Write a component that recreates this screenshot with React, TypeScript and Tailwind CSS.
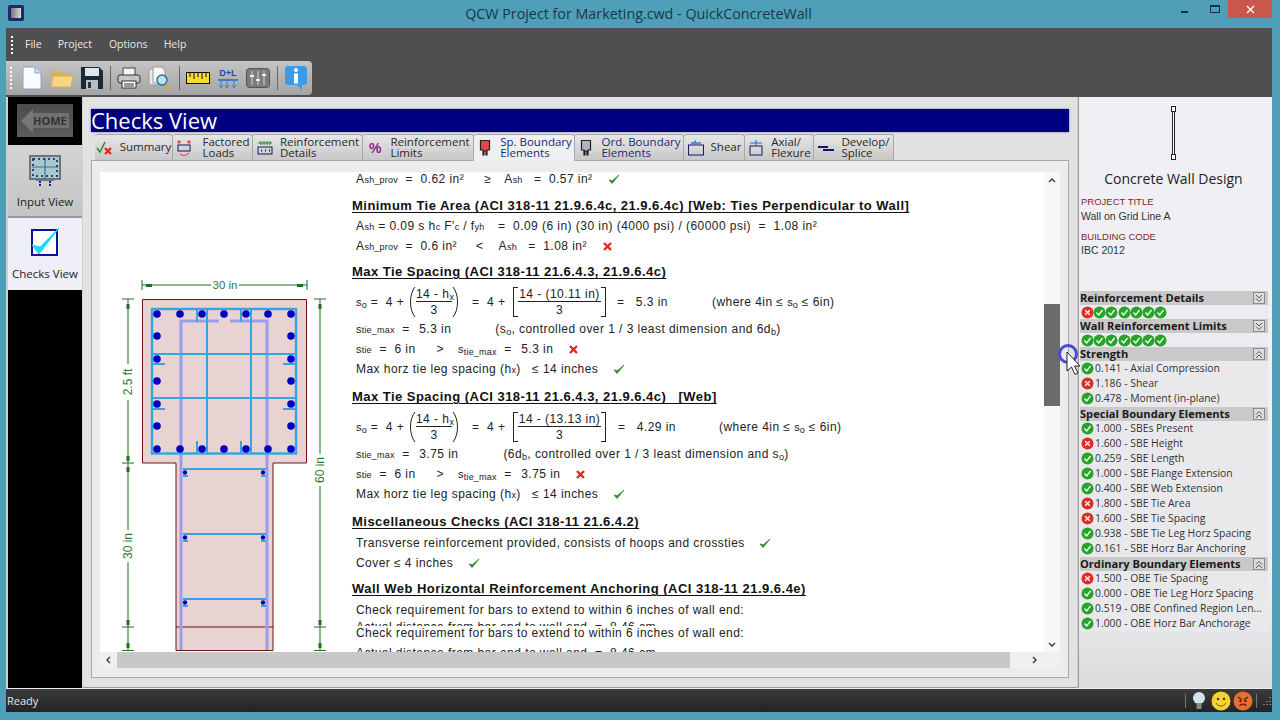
import React from "react";

const Check = ({ className = "" }: { className?: string }) => (
  <svg width="12" height="11" viewBox="0 0 12 11" className={"shrink-0 " + className}>
    <path d="M1 6 L4 9.5 L11 1 L4.3 6.8 Z" fill="#2f8a2f" stroke="#2f8a2f" strokeWidth="0.8" />
  </svg>
);
const Cross = ({ className = "" }: { className?: string }) => (
  <svg width="9" height="9" viewBox="0 0 9 9" className={"shrink-0 " + className}>
    <path d="M1 1 L8 8 M8 1 L1 8" stroke="#e0281c" strokeWidth="2.4" />
  </svg>
);
const Dot = ({ ok = true }: { ok?: boolean }) => (
  <svg width="13" height="13" viewBox="0 0 13 13" className="shrink-0">
    <circle cx="6.5" cy="6.5" r="6" fill={ok ? "#27a327" : "#e22c22"} />
    {ok ? (
      <path d="M3.5 6.5 L5.7 9 L9.5 4" stroke="#fff" strokeWidth="1.3" fill="none" />
    ) : (
      <path d="M4.2 4.2 L8.8 8.8 M8.8 4.2 L4.2 8.8" stroke="#fff" strokeWidth="1.3" />
    )}
  </svg>
);
const Sub = ({ children }: { children: React.ReactNode }) => (
  <span className="text-[9px] tracking-[0.2px] relative top-[2px]">{children}</span>
);
const S = ({ children }: { children: React.ReactNode }) => (
  <span className="text-[11px] tracking-[0.2px]">{children}</span>
);
const Row = ({ className = "", children }: { className?: string; children: React.ReactNode }) => (
  <div className={"h-[20px] flex items-center whitespace-pre pl-[4px] shrink-0 " + className}>{children}</div>
);
const Head = ({ className, children }: { className: string; children: React.ReactNode }) => (
  <div className={"h-[20px] flex items-center whitespace-pre shrink-0 font-bold underline underline-offset-[2px] text-[13px] tracking-[0.47px] text-[#111] " + className}>
    {children}
  </div>
);
const Paren = ({ flip = false }: { flip?: boolean }) => (
  <svg width="9" height="32" viewBox="0 0 9 32" className={flip ? "shrink-0 -scale-x-100" : "shrink-0"}>
    <path d="M8 1 C2 8 2 24 8 31" stroke="#222" fill="none" strokeWidth="1" />
  </svg>
);
const Frac = ({ top, w }: { top: React.ReactNode; w: string }) => (
  <div className={"flex flex-col items-center shrink-0 " + w}>
    <div className="h-[16px] leading-[16px] border-b border-[#222] w-full text-center">{top}</div>
    <div className="h-[16px] leading-[16px]">3</div>
  </div>
);

const Equation = ({ num, res, wide }: { num: string; res: string; wide?: boolean }) => (
  <div className="h-[34px] flex items-center whitespace-pre pl-[4px] shrink-0 mt-[3px]">
    <span className="w-[49px] shrink-0">
      <S>s</S>
      <Sub>o</Sub>
      <span> =  4 +</span>
    </span>
    <span className="ml-[2px] shrink-0 flex items-center">
      <Paren />
    </span>
    <Frac top={<span>14 - h<Sub>x</Sub></span>} w="w-[36px]" />
    <Paren flip />
    <span className="ml-[11px] w-[33px] shrink-0">=  4 +</span>
    <div className="ml-[8px] w-[5px] h-[30px] border-l border-t border-b border-[#222] shrink-0" />
    <Frac top={num} w="w-[83px]" />
    <div className="w-[5px] h-[30px] border-r border-t border-b border-[#222] shrink-0" />
    <span className={(wide ? "ml-[12px] w-[101px]" : "ml-[11px] w-[95px]") + " shrink-0"}>=   {res}</span>
    <span>
      (where 4in ≤ <S>s</S><Sub>o</Sub> ≤ 6in)
    </span>
  </div>
);

const Drawing = () => {
  const g = "#1f6f1f";
  const tx = [157, 180, 202, 224, 246, 268, 291];
  const ty = [336, 359, 381, 404, 426];
  const wy = [469, 534, 599];
  const tick = (x: number, y: number, k: string) => (
    <path key={k} d={`M${x - 6} ${y}H${x + 6}`} stroke={g} strokeWidth="1" />
  );
  return (
    <svg width="252" height="480" viewBox="100 172 252 480" className="shrink-0">
      <path d="M142 285H307M142 280V290M307 280V290" stroke={g} strokeWidth="1" fill="none" />
      <rect x="146" y="284" width="6" height="3" fill={g} />
      <rect x="297" y="284" width="6" height="3" fill={g} />
      <rect x="211" y="278" width="28" height="14" fill="#fff" />
      <text x="225" y="289" textAnchor="middle" fontSize="11.5" fill="#2f7a2f" fontFamily="Liberation Sans">30 in</text>

      <path d="M142.5 299.5H306.5V463H273V650.5H176V463H142.5Z" fill="#e8d3d2" stroke="#6e1212" strokeWidth="1" />
      <path d="M176 627H273" stroke="#6e1212" strokeWidth="1" />

      <path d="M181 650V321H219M230 321H267V650" stroke="#9c9cec" strokeWidth="3" fill="none" />
      <g stroke="#35a4e0" strokeWidth="2" fill="none">
        <rect x="152" y="309" width="144" height="144.5" strokeWidth="2.4" />
        <path d="M152 354H296M152 398H296M207 309V453M251 309V453" />
        <path d="M197 309V322M241 309V322M197 453V441M241 453V441" />
        <path d="M153 364H165M283 364H295M153 409H165M283 409H295" />
        {wy.map((y) => (
          <path key={y} d={`M183 ${y}H266M183 ${y + 7}H188M261 ${y + 7}H266`} />
        ))}
      </g>
      {tx.map((x) => (
        <g key={x}>
          <circle cx={x} cy="314" r="3.8" fill="#0000c4" />
          <circle cx={x} cy="449" r="3.8" fill="#0000c4" />
        </g>
      ))}
      {ty.map((y) => (
        <g key={y}>
          <circle cx="157" cy={y} r="3.8" fill="#0000c4" />
          <circle cx="291" cy={y} r="3.8" fill="#0000c4" />
        </g>
      ))}
      {wy.map((y) => (
        <g key={y}>
          <circle cx="185" cy={y + 3.5} r="2.2" fill="#0000b0" />
          <circle cx="263" cy={y + 3.5} r="2.2" fill="#0000b0" />
        </g>
      ))}

      <path d="M128 299V651M320 299V651" stroke={g} strokeWidth="1" />
      {[299, 463, 627, 650.5].map((y) => tick(128, y, "l" + y))}
      {[299, 627, 650.5].map((y) => tick(320, y, "r" + y))}
      {[304, 456, 467, 620, 643].map((y) => (
        <rect key={y} x="126.5" y={y} width="3" height="5" fill={g} />
      ))}
      {[304, 620, 643].map((y) => (
        <rect key={y} x="318.5" y={y} width="3" height="5" fill={g} />
      ))}
      <rect x="120" y="364" width="16" height="36" fill="#fff" />
      <rect x="120" y="530" width="16" height="32" fill="#fff" />
      <rect x="312" y="454" width="16" height="32" fill="#fff" />
      <text transform="translate(132 382) rotate(-90)" textAnchor="middle" fontSize="12" fill="#2f7a2f" fontFamily="Liberation Sans">2.5 ft</text>
      <text transform="translate(132 546) rotate(-90)" textAnchor="middle" fontSize="12" fill="#2f7a2f" fontFamily="Liberation Sans">30 in</text>
      <text transform="translate(324 470) rotate(-90)" textAnchor="middle" fontSize="12" fill="#2f7a2f" fontFamily="Liberation Sans">60 in</text>
    </svg>
  );
};

const TabIcon = ({ kind }: { kind: string }) => {
  const c = "#15156e";
  return (
    <svg width="18" height="18" viewBox="0 0 18 18" className="shrink-0">
      {kind === "summary" && (
        <g>
          <path d="M1 9 L4 13 L9 3" stroke="#2f8a2f" strokeWidth="1.5" fill="none" />
          <path d="M9 9 L15 15 M15 9 L9 15" stroke="#e0281c" strokeWidth="2.4" />
        </g>
      )}
      {kind === "loads" && (
        <g fill="none">
          <path d="M4 1V5M6 3H2M14 1V5M16 3H12" stroke="#e0281c" strokeWidth="1" />
          <rect x="3" y="6" width="12" height="6" stroke={c} />
          <path d="M5 15 C8 17 11 17 14 14" stroke="#e0281c" />
        </g>
      )}
      {kind === "details" && (
        <g fill="none">
          <path d="M2 4H16M5 2V6M8 2V6M11 2V6M14 2V6" stroke="#1f8a1f" />
          <rect x="2" y="8" width="14" height="7" stroke={c} />
          <path d="M5 11.5H6M9 11.5H10M13 11.5H14" stroke={c} strokeWidth="2" />
        </g>
      )}
      {kind === "limits" && (
        <text x="3" y="14" fontSize="14" fontWeight="700" fill="#8a1f8a" fontFamily="Liberation Sans">%</text>
      )}
      {(kind === "sp" || kind === "ord") && (
        <path d="M4.5 1.5H13.5V11H11V16H10V12H8V16H7V11H4.5Z" fill={kind === "sp" ? "#e8454a" : "#aeb4c4"} stroke="#222" strokeWidth="1.2" />
      )}
      {kind === "shear" && (
        <g fill="none">
          <rect x="1.5" y="6" width="15" height="10" stroke={c} />
          <path d="M4 4H14" stroke="#1e70d0" strokeWidth="1.4" />
          <path d="M8 1.5V4" stroke="#1e70d0" strokeWidth="1.4" />
        </g>
      )}
      {kind === "axial" && (
        <g fill="none">
          <rect x="3" y="7" width="12" height="9" stroke={c} />
          <path d="M3 4H15M9 1V7" stroke="#1e70d0" strokeWidth="1.2" />
        </g>
      )}
      {kind === "dev" && <path d="M1 8H11M6 11H17" stroke="#12126e" strokeWidth="2" />}
    </svg>
  );
};

const Tab = ({ kind, w, l1, l2, active = false, gap = "gap-[6px]" }: { kind: string; w: string; l1: string; l2?: string; active?: boolean; gap?: string }) => (
  <div
    className={
      "h-[26px] flex items-center justify-center border-r border-t border-[#a8a8a8] rounded-t-[3px] shrink-0 " + gap + " " + w + " " +
      (active ? "bg-[#eef0f2] h-[27px] -mb-[1px] relative" : "bg-gradient-to-b from-[#e6e6e6] to-[#c8c8c8]")
    }
  >
    <TabIcon kind={kind} />
    <div className={"text-[11.5px] leading-[11px] whitespace-nowrap pb-[2px] " + (kind === "sp" || kind === "ord" ? "text-[#1c2a78]" : "text-[#2a2a2a]")}>
      <div>{l1}</div>
      {l2 && <div>{l2}</div>}
    </div>
  </div>
);

const SecHead = ({ t, up = false }: { t: string; up?: boolean }) => (
  <div className="h-[14px] bg-[#c9c9c9] flex items-center justify-between pr-[3px] shrink-0">
    <span className="font-bold text-[11.1px] text-[#1a1a1a] leading-[14px] whitespace-nowrap">{t}</span>
    <span className="w-[12px] h-[12px] border border-[#8a8a8a] bg-[#dcdcdc] flex items-center justify-center">
      <svg width="8" height="9" viewBox="0 0 8 9">
        {up ? (
          <path d="M1 4.5L4 1.5L7 4.5M1 8L4 5L7 8" stroke="#555" fill="none" />
        ) : (
          <path d="M1 1L4 4L7 1M1 4.5L4 7.5L7 4.5" stroke="#555" fill="none" />
        )}
      </svg>
    </span>
  </div>
);
const Dots = ({ bad = false }: { bad?: boolean }) => (
  <div className="h-[14px] flex items-center pl-[1px] bg-[#ececf0] shrink-0">
    {[0, 1, 2, 3, 4, 5, 6].map((i) => (
      <span key={i} className="w-[12.2px] shrink-0">
        <Dot ok={!(bad && i === 0)} />
      </span>
    ))}
  </div>
);
const Item = ({ ok = true, t }: { ok?: boolean; t: string }) => (
  <div className="h-[15px] flex items-center pl-[1px] gap-[1px] bg-[#e9e9ec] shrink-0 text-[10.4px] text-[#333] whitespace-nowrap">
    <Dot ok={ok} />
    <span>{t}</span>
  </div>
);

const Sep = () => <div className="w-[1px] h-[24px] bg-[#f4f4f4] border-r border-[#666] shrink-0" />;

const Toolbar = () => (
  <div className="w-[306px] h-[34px] bg-gradient-to-b from-[#c4c4c4] to-[#a4a4a4] rounded-r-[4px] flex items-center pl-[4px] shrink-0">
    <div className="w-[2px] h-[22px] border-l-2 border-dotted border-white shrink-0" />
    <svg width="20" height="24" viewBox="0 0 20 24" className="ml-[10px] shrink-0">
      <path d="M1 1H13L19 7V23H1Z" fill="#fafcff" stroke="#7fa6c8" />
      <path d="M13 1V7H19" fill="#cfe0ef" stroke="#7fa6c8" />
    </svg>
    <svg width="24" height="20" viewBox="0 0 24 20" className="ml-[8px] shrink-0">
      <path d="M1 3H9L11 5H20V9H1Z" fill="#d8b056" />
      <path d="M1 19L3 8H23L21 19Z" fill="#f6d680" stroke="#d8b056" />
    </svg>
    <svg width="22" height="22" viewBox="0 0 22 22" className="ml-[7px] shrink-0">
      <path d="M0 0H18L22 4V22H0Z" fill="#1d2a34" />
      <rect x="4" y="1" width="14" height="8" fill="#dfe6ea" />
      <rect x="5" y="13" width="12" height="9" fill="#b8bec4" />
      <rect x="7" y="15" width="3" height="6" fill="#333" />
    </svg>
    <div className="ml-[7px] shrink-0"><Sep /></div>
    <svg width="24" height="22" viewBox="0 0 24 22" className="ml-[6px] shrink-0">
      <rect x="6" y="1" width="12" height="8" fill="#f4f4f4" stroke="#444" />
      <rect x="1" y="8" width="22" height="8" rx="2" fill="#c6c6c6" stroke="#333" />
      <rect x="5" y="14" width="14" height="7" fill="#fff" stroke="#333" />
      <path d="M7 17H17M7 19H17" stroke="#333" />
    </svg>
    <svg width="24" height="24" viewBox="0 0 24 24" className="ml-[7px] shrink-0">
      <path d="M1 3H10V19H1Z" fill="#e8e8e8" stroke="#999" />
      <path d="M5 1H14L17 5V17H5Z" fill="#f8f8f8" stroke="#999" />
      <circle cx="14" cy="14" r="5" fill="#bfe2f2" stroke="#2a6f9a" strokeWidth="1.4" />
      <path d="M18 18L23 23" stroke="#d8a83a" strokeWidth="2.4" />
    </svg>
    <div className="ml-[7px] shrink-0"><Sep /></div>
    <svg width="24" height="12" viewBox="0 0 24 12" className="ml-[6px] shrink-0">
      <rect x="0.5" y="0.5" width="23" height="11" fill="#f8dc2a" stroke="#111" />
      <path d="M4 1V5M8 1V7M12 1V5M16 1V7M20 1V5" stroke="#111" />
    </svg>
    <svg width="22" height="22" viewBox="0 0 22 22" className="ml-[7px] shrink-0">
      <text x="11" y="9" textAnchor="middle" fontSize="9" fontWeight="700" fill="#1f49b4" fontFamily="Liberation Sans">D+L</text>
      <path d="M1 13H21" stroke="#3a7fc8" strokeWidth="2" />
      <path d="M4 13V20M10 13V20M17 13V20M2 18L4 21L6 18M8 18L10 21L12 18M15 18L17 21L19 18" stroke="#3a7fc8" fill="none" />
    </svg>
    <svg width="24" height="20" viewBox="0 0 24 20" className="ml-[7px] shrink-0">
      <rect x="0.5" y="0.5" width="23" height="19" rx="3" fill="#7c7c7c" stroke="#555" />
      <path d="M6 3V17M12 3V17M18 3V17" stroke="#d8d8d8" />
      <path d="M4 8H8M10 12H14M16 7H20" stroke="#eee" strokeWidth="2" />
    </svg>
    <div className="ml-[7px] shrink-0"><Sep /></div>
    <svg width="24" height="26" viewBox="0 0 24 26" className="ml-[6px] shrink-0">
      <path d="M4 1H20A3 3 0 0 1 23 4V17A3 3 0 0 1 20 20H18V25L13 20H4A3 3 0 0 1 1 17V4A3 3 0 0 1 4 1Z" fill="#3b9be6" />
      <circle cx="12" cy="5" r="2" fill="#fff" />
      <rect x="10" y="8.5" width="4" height="10" fill="#fff" />
    </svg>
  </div>
);

const mono = "font-['Liberation_Sans',Arial,sans-serif]";

export default function App() {
  return (
    <div className="w-[1280px] h-[720px] bg-[#509fb8] flex flex-col overflow-hidden relative font-['Open_Sans',sans-serif]">
      {/* title bar */}
      <div className="h-[28px] shrink-0 flex items-start relative">
        <div className="ml-[8px] mt-[5px] w-[16px] h-[16px] rounded-[2px] bg-[#23266a] flex items-center justify-center shrink-0">
          <div className="w-[10px] h-[10px] bg-gradient-to-r from-[#777] to-[#ddd]" />
        </div>
        <div className="flex-1 text-center text-[14.3px] leading-[28px] text-[#17384a] pl-[72px]">QCW Project for Marketing.cwd - QuickConcreteWall</div>
        <div className="w-[7px] h-[2px] mt-[11px] bg-[#0f3044] mr-[22px] shrink-0" />
        <div className="w-[10px] h-[8px] mt-[5px] border border-t-2 border-[#0f3044] mr-[8px] shrink-0" />
        <div className="w-[44px] h-[18px] bg-[#c9574e] flex items-center justify-center mr-[8px] shrink-0">
          <svg width="9" height="9" viewBox="0 0 9 9"><path d="M1 1L8 8M8 1L1 8" stroke="#fff" strokeWidth="1.4" /></svg>
        </div>
      </div>

      {/* window */}
      <div className="ml-[6px] w-[1266px] h-[684px] flex flex-col bg-[#4f4f4f] shrink-0">
        <div className="h-[33px] flex items-center pl-[5px] shrink-0 text-[10.5px] text-[#e8e8e8] pt-[1px]">
          <div className="w-[2px] h-[18px] border-l-2 border-dotted border-white mr-[12px]" />
          <span className="mr-[16px]">File</span>
          <span className="mr-[17px]">Project</span>
          <span className="mr-[16px]">Options</span>
          <span>Help</span>
        </div>
        <Toolbar />
        <div className="h-[2px] shrink-0" />

        {/* body */}
        <div className="flex-1 flex bg-[#d0d0d0] min-h-0">
          {/* left nav */}
          <div className="ml-[2px] w-[74px] bg-black flex flex-col shrink-0">
            <div className="h-[48px] flex items-start justify-center pt-[7px] shrink-0">
              <div className="w-[56px] h-[33px] bg-gradient-to-b from-[#4c4c4c] to-[#5c5c5c] flex items-center pl-[4px]">
                <svg width="12" height="24" viewBox="0 0 12 24" className="shrink-0"><path d="M0 12L12 0V24Z" fill="#777" /></svg>
                <div className="h-[15px] w-[36px] bg-[#707070] text-[11px] leading-[15px] font-bold text-[#333] text-left">HOME</div>
              </div>
            </div>
            <div className="h-[73px] bg-gradient-to-b from-[#d4d4d4] to-[#c4c4c4] border-b-2 border-[#999] flex flex-col items-center pt-[10px] shrink-0">
              <svg width="32" height="32" viewBox="0 0 32 32" className="shrink-0">
                <rect x="1" y="1" width="30" height="23" fill="#a8c8cc" stroke="#6c7478" strokeWidth="2" />
                <path d="M3 12H29M16 3V24" stroke="#2a7a92" strokeWidth="1.2" />
                <rect x="4" y="4" width="24" height="17" fill="none" stroke="#10107a" strokeDasharray="2 3" strokeWidth="1.5" />
                <rect x="7" y="24" width="18" height="2" fill="#6c7478" />
                <path d="M11 26V31M21 26V31" stroke="#2020a0" strokeWidth="2" strokeDasharray="2 1" />
              </svg>
              <div className="text-[11.5px] text-[#222] mt-[7px] leading-[16px]">Input View</div>
            </div>
            <div className="h-[72px] bg-[#eeeef6] flex flex-col items-center pt-[9px] shrink-0">
              <svg width="32" height="30" viewBox="0 0 32 30" className="shrink-0">
                <rect x="3" y="3" width="25" height="25" fill="#fff" stroke="#1010a0" strokeWidth="2" />
                <path d="M3 18L10 27L30 1L11 20Z" fill="#28d4f4" stroke="#28d4f4" />
              </svg>
              <div className="text-[11.5px] text-[#222] mt-[9px] leading-[16px]">Checks View</div>
            </div>
          </div>

          {/* main */}
          <div className="ml-[1px] w-[994px] bg-[#e2e2e2] border-b border-[#999] shrink-0 flex flex-col pt-[12px] px-[8px]">
            <div className="h-[23px] bg-[#000080] text-white text-[22px] leading-[23px] shrink-0 shadow-[0_0_2px_#6a6ac0]">Checks View</div>
            <div className="h-[26px] mt-[2px] pl-[4px] flex shrink-0 relative">
              <Tab kind="summary" w="w-[78px]" l1="Summary" />
              <Tab kind="loads" w="w-[80px]" l1="Factored" l2="Loads" gap="gap-[9px]" />
              <Tab kind="details" w="w-[110px]" l1="Reinforcement" l2="Details" />
              <Tab kind="limits" w="w-[111px]" l1="Reinforcement" l2="Limits" gap="gap-[6px]" />
              <Tab kind="sp" w="w-[101px]" l1="Sp. Boundary" l2="Elements" active />
              <Tab kind="ord" w="w-[109px]" l1="Ord. Boundary" l2="Elements" />
              <Tab kind="shear" w="w-[61px]" l1="Shear" />
              <Tab kind="axial" w="w-[69px]" l1="Axial/" l2="Flexure" />
              <Tab kind="dev" w="w-[80px]" l1="Develop/" l2="Splice" />
            </div>
            <div className="h-[518px] border border-[#a8a8a8] bg-[#ececec] pt-[11px] pl-[8px] pr-[8px] shrink-0 flex flex-col">
              <div className="h-[480px] bg-white flex shrink-0">
                <div className={"w-[944px] h-[480px] overflow-hidden flex " + mono}>
                  <Drawing />
                  <div className="flex flex-col text-[12px] tracking-[0.45px] text-[#222] min-w-0 flex-1">
                    <div className="h-[14px] flex items-center whitespace-pre pl-[4px] shrink-0">
                      A<Sub>sh_prov</Sub><span>  =  0.62 in²</span>
                      <span className="ml-[20px]">≥</span>
                      <span className="ml-[13px]">A</span><Sub>sh</Sub><span>   =  0.57 in²</span><Check className="ml-[15px]" />
                    </div>
                    <Head className="mt-[10px]">Minimum Tie Area (ACI 318-11 21.9.6.4c, 21.9.6.4c) [Web: Ties Perpendicular to Wall]</Head>
                    <Row>
                      A<Sub>sh</Sub><span> = 0.09 s h</span><Sub>c</Sub><span> F'</span><Sub>c</Sub><span> / f</span><Sub>yh</Sub><span className="ml-[6px]">  =  0.09 (6 in) (30 in) (4000 psi) / (60000 psi)  =  1.08 in²</span>
                    </Row>
                    <Row>
                      A<Sub>sh_prov</Sub><span>  =  0.6 in²</span>
                      <span className="ml-[19px]">&lt;</span>
                      <span className="ml-[15px]">A</span><Sub>sh</Sub><span>   =  1.08 in²</span><Cross className="ml-[16px]" />
                    </Row>
                    <Head className="mt-[6px]">Max Tie Spacing (ACI 318-11 21.6.4.3, 21.9.6.4c)</Head>
                    <Equation num="14 - (10.11 in)" res="5.3 in" />
                    <Row>
                      <S>s</S><Sub>tie_max</Sub><span>  =  </span><span className="ml-[2px]">5.3 in</span><span className="ml-[44px]">(s<Sub>o</Sub>, controlled over 1 / 3 least dimension and 6d<Sub>b</Sub>)</span>
                    </Row>
                    <Row>
                      <S>s</S><Sub>tie</Sub><span>  =  6 in</span>
                      <span className="ml-[21px]">&gt;</span>
                      <span className="ml-[14px]"><S>s</S><Sub>tie_max</Sub></span><span>  =  </span><span className="ml-[2px]">5.3 in</span><Cross className="ml-[16px]" />
                    </Row>
                    <Row>
                      <span>Max horz tie leg spacing (h</span><Sub>x</Sub><span>)   ≤ 14 inches</span><Check className="ml-[15px]" />
                    </Row>
                    <Head className="mt-[8px]">Max Tie Spacing (ACI 318-11 21.6.4.3, 21.9.6.4c)   [Web]</Head>
                    <Equation num="14 - (13.13 in)" res="4.29 in" wide />
                    <Row>
                      <S>s</S><Sub>tie_max</Sub><span>  =  </span><span className="ml-[2px]">3.75 in</span><span className="ml-[45px]">(6d<Sub>b</Sub>, controlled over 1 / 3 least dimension and s<Sub>o</Sub>)</span>
                    </Row>
                    <Row>
                      <S>s</S><Sub>tie</Sub><span>  =  6 in</span>
                      <span className="ml-[21px]">&gt;</span>
                      <span className="ml-[14px]"><S>s</S><Sub>tie_max</Sub></span><span>  =  </span><span className="ml-[2px]">3.75 in</span><Cross className="ml-[16px]" />
                    </Row>
                    <Row>
                      <span>Max horz tie leg spacing (h</span><Sub>x</Sub><span>)   ≤ 14 inches</span><Check className="ml-[15px]" />
                    </Row>
                    <Head className="mt-[8px]">Miscellaneous Checks (ACI 318-11 21.6.4.2)</Head>
                    <Row className="mt-[1px]">
                      <span>Transverse reinforcement provided, consists of hoops and crossties</span><Check className="ml-[14px]" />
                    </Row>
                    <Row>
                      <span>Cover ≤ 4 inches</span><Check className="ml-[15px]" />
                    </Row>
                    <Head className="mt-[6px]">Wall Web Horizontal Reinforcement Anchoring (ACI 318-11 21.9.6.4e)</Head>
                    <Row className="mt-[1px]">Check requirement for bars to extend to within 6 inches of wall end:</Row>
                    <div className="relative h-[20px] mt-[3px] shrink-0 flex items-center whitespace-pre pl-[4px]">
                      <div className="absolute left-[4px] top-[-4px] h-[7px] overflow-hidden leading-[16px]">Actual distance from bar end to wall end  =  8.46 cm</div>
                      <span className="relative">Check requirement for bars to extend to within 6 inches of wall end:</span>
                    </div>
                    <Row>Actual distance from bar end to wall end  =  8.46 cm</Row>
                  </div>
                </div>
                {/* vertical scroll */}
                <div className="w-[16px] bg-[#f7f7f7] flex flex-col shrink-0">
                  <div className="h-[16px] flex items-center justify-center shrink-0">
                    <svg width="8" height="5" viewBox="0 0 8 5"><path d="M1 4L4 1L7 4" stroke="#444" strokeWidth="1.5" fill="none" /></svg>
                  </div>
                  <div className="h-[102px] mt-[116px] bg-[#6b6b6b] shrink-0" />
                  <div className="flex-1" />
                  <div className="h-[16px] flex items-center justify-center shrink-0">
                    <svg width="8" height="5" viewBox="0 0 8 5"><path d="M1 1L4 4L7 1" stroke="#444" strokeWidth="1.5" fill="none" /></svg>
                  </div>
                </div>
              </div>
              {/* horizontal scroll */}
              <div className="h-[16px] bg-[#f0f0f0] flex items-center shrink-0">
                <div className="w-[17px] flex items-center justify-center shrink-0">
                  <svg width="5" height="8" viewBox="0 0 5 8"><path d="M4 1L1 4L4 7" stroke="#444" strokeWidth="1.5" fill="none" /></svg>
                </div>
                <div className="w-[893px] h-[16px] bg-[#c8c8c8] shrink-0" />
                <div className="flex-1 flex items-center justify-center pr-[1px]">
                  <svg width="5" height="8" viewBox="0 0 5 8"><path d="M1 1L4 4L1 7" stroke="#444" strokeWidth="1.5" fill="none" /></svg>
                </div>
              </div>
            </div>
          </div>

          {/* right panel */}
          <div className="ml-[1px] w-[194px] border-l border-[#9a9a9a] shrink-0 flex flex-col pl-[1px] pr-[4px] bg-gradient-to-b from-[#f0f0f4] from-[80%] to-[#dcdcdc]">
            <svg width="8" height="56" viewBox="0 0 8 56" className="self-center mt-[8px] shrink-0">
              <rect x="1.5" y="1.5" width="4" height="5" fill="#fff" stroke="#222" />
              <rect x="1.5" y="49.5" width="4" height="5" fill="#fff" stroke="#222" />
              <rect x="2.5" y="6.5" width="2" height="43" fill="#fff" stroke="#222" />
            </svg>
            <div className="text-center text-[14px] leading-[20px] text-[#222] mt-[8px] shrink-0 pr-[1px]">Concrete Wall Design</div>
            <div className={"text-[9.5px] leading-[14px] text-[#7a2a2a] mt-[6px] pl-[1px] shrink-0 " + mono}>PROJECT TITLE</div>
            <div className={"text-[10.5px] leading-[14px] text-[#333] pl-[1px] shrink-0 " + mono}>Wall on Grid Line A</div>
            <div className={"text-[9.5px] leading-[14px] text-[#7a2a2a] mt-[7px] pl-[1px] shrink-0 " + mono}>BUILDING CODE</div>
            <div className={"text-[10.5px] leading-[13px] text-[#333] pl-[1px] shrink-0 mb-[34px] " + mono}>IBC 2012</div>

            <SecHead t="Reinforcement Details" />
            <Dots bad />
            <SecHead t="Wall Reinforcement Limits" />
            <Dots />
            <SecHead t="Strength" up />
            <Item t="0.141 - Axial Compression" />
            <Item ok={false} t="1.186 - Shear" />
            <Item t="0.478 - Moment (in-plane)" />
            <div className="h-[1px] bg-[#e9e9ec] shrink-0" />
            <SecHead t="Special Boundary Elements" up />
            <Item t="1.000 - SBEs Present" />
            <Item ok={false} t="1.600 - SBE Height" />
            <Item t="0.259 - SBE Length" />
            <Item t="1.000 - SBE Flange Extension" />
            <Item t="0.400 - SBE Web Extension" />
            <Item ok={false} t="1.800 - SBE Tie Area" />
            <Item ok={false} t="1.600 - SBE Tie Spacing" />
            <Item t="0.938 - SBE Tie Leg Horz Spacing" />
            <Item t="0.161 - SBE Horz Bar Anchoring" />
            <div className="h-[1px] bg-[#e9e9ec] shrink-0" />
            <SecHead t="Ordinary Boundary Elements" up />
            <Item ok={false} t="1.500 - OBE Tie Spacing" />
            <Item t="0.000 - OBE Tie Leg Horz Spacing" />
            <Item t="0.519 - OBE Confined Region Len..." />
            <Item t="1.000 - OBE Horz Bar Anchorage" />
          </div>
        </div>

        {/* status */}
        <div className="h-[24px] bg-gradient-to-b from-[#3c3c3e] to-[#232325] flex items-center pl-[1px] text-[11px] text-[#e4e4e4] shrink-0 border-t border-[#eee]">
          <span className="flex-1 pt-[2px]">Ready</span>
          <div className="w-[1px] h-[14px] bg-[#777] mr-[6px]" />
          <svg width="14" height="19" viewBox="0 0 14 19" className="mr-[5px]">
            <circle cx="7" cy="7" r="6" fill="#cfe4ee" />
            <rect x="4.5" y="12" width="5" height="6" fill="#8a8a7a" />
          </svg>
          <svg width="20" height="20" viewBox="0 0 20 20" className="mr-[2px]">
            <circle cx="10" cy="10" r="9.5" fill="#f4d232" />
            <circle cx="7" cy="8" r="1.2" fill="#333" />
            <circle cx="13" cy="8" r="1.2" fill="#333" />
            <path d="M5 12C7 16 13 16 15 12" stroke="#7a5a10" fill="none" />
          </svg>
          <svg width="20" height="20" viewBox="0 0 20 20">
            <circle cx="10" cy="10" r="9.5" fill="#e8702c" />
            <path d="M5 6L9 8.5M15 6L11 8.5" stroke="#552010" strokeWidth="1.4" />
            <circle cx="7.5" cy="10" r="1.2" fill="#421" />
            <circle cx="12.5" cy="10" r="1.2" fill="#421" />
            <path d="M6.5 15C8 12.5 12 12.5 13.5 15" stroke="#552010" strokeWidth="1.2" fill="none" />
          </svg>
          <div className="w-[1px] h-[14px] bg-[#777] ml-[3px] mr-[5px]" />
          <svg width="10" height="10" viewBox="0 0 10 10">
            <path d="M8 1V2M8 5V6M8 8V9M5 5V6M5 8V9M2 8V9" stroke="#ccc" />
          </svg>
        </div>
      </div>

      {/* cursor overlay */}
      <svg width="26" height="34" viewBox="0 0 26 34" className="absolute left-[1057px] top-[343px]">
        <circle cx="11" cy="11" r="8.5" fill="none" stroke="#4a4ad8" strokeWidth="3" />
        <path d="M10 9V28L14.5 24L18 31.5L21 30L17.5 23L23 23Z" fill="#fff" stroke="#222" strokeWidth="1" />
      </svg>
    </div>
  );
}
